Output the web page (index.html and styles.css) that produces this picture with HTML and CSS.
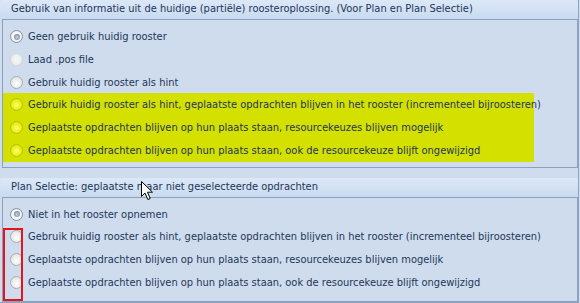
FILE: index.html
```html
<!DOCTYPE html>
<html lang="nl">
<head>
<meta charset="utf-8">
<title>Roosteroplossing</title>
<link rel="stylesheet" href="styles.css">
</head>
<body>
<div class="panel">
  <section class="group group-first">
    <div class="group-header">Gebruik van informatie uit de huidige (partiële) roosteroplossing. (Voor Plan en Plan Selectie)</div>
    <div class="group-body body-first">
      <label class="opt"><span class="radio checked"></span>Geen gebruik huidig rooster</label>
      <label class="opt"><span class="radio disabled"></span>Laad .pos file</label>
      <label class="opt"><span class="radio"></span>Gebruik huidig rooster als hint</label>
      <div class="highlight">
        <label class="opt"><span class="radio yellow"></span>Gebruik huidig rooster als hint, geplaatste opdrachten blijven in het rooster (incrementeel bijroosteren)</label>
        <label class="opt"><span class="radio yellow"></span>Geplaatste opdrachten blijven op hun plaats staan, resourcekeuzes blijven mogelijk</label>
        <label class="opt"><span class="radio yellow"></span>Geplaatste opdrachten blijven op hun plaats staan, ook de resourcekeuze blijft ongewijzigd</label>
      </div>
    </div>
  </section>
  <section class="group group-second">
    <div class="group-header">Plan Selectie: geplaatste maar niet geselecteerde opdrachten</div>
    <div class="group-body body-second">
      <label class="opt"><span class="radio checked"></span>Niet in het rooster opnemen</label>
      <label class="opt"><span class="radio"></span>Gebruik huidig rooster als hint, geplaatste opdrachten blijven in het rooster (incrementeel bijroosteren)</label>
      <label class="opt"><span class="radio"></span>Geplaatste opdrachten blijven op hun plaats staan, resourcekeuzes blijven mogelijk</label>
      <label class="opt"><span class="radio"></span>Geplaatste opdrachten blijven op hun plaats staan, ook de resourcekeuze blijft ongewijzigd</label>
      <div class="marker"></div>
    </div>
  </section>
  <svg class="cursor" width="13" height="20" viewBox="0 0 13 20" aria-hidden="true">
    <path d="M0.5 0.5 L0.5 15.5 L4 12 L6.8 18.5 L9.2 17.5 L6.5 11.2 L11.5 11.2 Z" fill="#fff" stroke="#000" stroke-width="1" stroke-linejoin="miter"/>
  </svg>
</div>
</body>
</html>
```
FILE: styles.css
```css
html, body {
  margin: 0;
  padding: 0;
  background: #cfdcee;
}
body {
  width: 580px;
  height: 303px;
  overflow: hidden;
  font-family: Tahoma, "DejaVu Sans Condensed", "Liberation Sans", sans-serif;
  font-size: 11px;
  color: #1d3758;
}
.panel {
  position: relative;
  width: 578px;
  height: 302px;
  border-right: 1px solid #8fa4c2;
  border-bottom: 1px solid #8fa4c2;
  background: #cfdcee;
}
.group-first {
  padding-bottom: 10px;
}
.group-header {
  height: 19px;
  line-height: 18px;
  padding-left: 11px;
  background: linear-gradient(#dce8f7, #c9daf0);
  border-radius: 2px 2px 0 0;
  box-sizing: border-box;
  white-space: nowrap;
}
.group-body {
  margin-left: 2px;
  width: 574px;
  border: 1px solid #8ca1c0;
  background: #cfdcee;
}
.body-first {
  padding-top: 5px;
  height: 142px;
}
.body-second {
  position: relative;
  padding-top: 5px;
  height: 98px;
}
.opt {
  display: flex;
  align-items: center;
  height: 23px;
  padding-left: 7px;
  white-space: nowrap;
}
.highlight {
  width: 531px;
  background: #d4e000;
  height: 69px;
  margin-top: -1px;
  display: flex;
  flex-direction: column;
}
.body-second .opt { height: 22.6px; }
.radio {
  flex: none;
  width: 11px;
  height: 11px;
  margin-right: 5px;
  border-radius: 50%;
  border: 1px solid #a9acb0;
  background: radial-gradient(circle at 50% 60%, #ffffff 0, #f2f2f2 35%, #d9dadb 100%);
  box-sizing: content-box;
  position: relative;
}
.radio.checked {
  border-color: #8c9096;
  background: radial-gradient(circle, #ffffff 0, #f4f4f4 60%, #d6d8db 100%);
}
.radio.checked::after {
  content: "";
  position: absolute;
  left: 2.5px;
  top: 2.5px;
  width: 6px;
  height: 6px;
  border-radius: 50%;
  background: radial-gradient(circle at 50% 55%, #c9d5e6 0, #8ba0bd 55%, #5b7192 100%);
}
.radio.disabled {
  border-color: #d3d6d9;
  background: radial-gradient(circle, #f6f7f8 0, #e6e8ea 100%);
}
.radio.yellow {
  border-color: #b9c100;
  background: radial-gradient(circle at 50% 55%, #fbff6a 0, #eef22a 45%, #d4da00 100%);
}
.marker {
  position: absolute;
  left: 0;
  top: 30px;
  width: 16px;
  height: 69px;
  border: 2px solid #e4141b;
}
.cursor {
  position: absolute;
  left: 141px;
  top: 181px;
}
```
